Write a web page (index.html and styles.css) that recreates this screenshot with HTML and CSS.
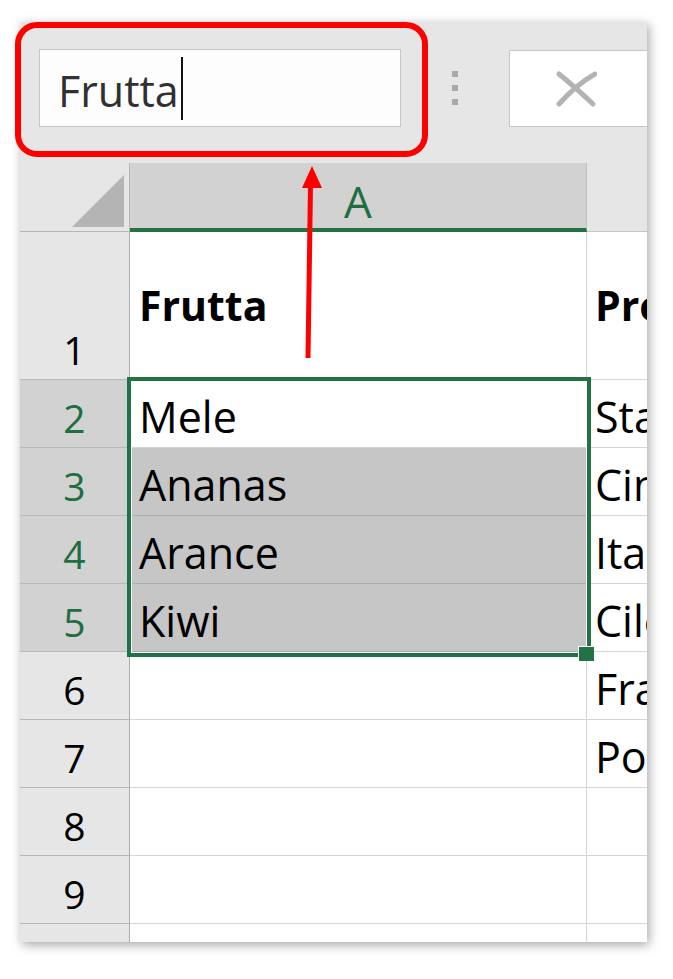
FILE: index.html
```html
<!DOCTYPE html>
<html lang="it">
<head>
<meta charset="utf-8">
<title>Casella Nome</title>
<link rel="stylesheet" href="styles.css">
</head>
<body>
<div class="stage">
  <div class="sheet">
    <div class="fbar">
      <div class="namebox"><span class="nb-text">Frutta</span><span class="caret"></span></div>
      <div class="grip"><i></i><i></i><i></i></div>
      <div class="cancel">
        <svg class="x-icon" width="42" height="38" viewBox="0 0 42 38" aria-hidden="true">
          <path d="M4 4 Q20 17 38 34" />
          <path d="M40 4 Q22 14 4 34" />
        </svg>
      </div>
    </div>

    <div class="hrow">
      <div class="corner">
        <svg width="52" height="52" viewBox="0 0 52 52" aria-hidden="true"><polygon points="52,0 52,52 0,52" /></svg>
      </div>
      <div class="colhdr sel">A</div>
      <div class="colhdr">B</div>
    </div>

    <div class="row tall">
      <div class="rh">1</div>
      <div class="c head">Frutta</div>
      <div class="c b head">Provenienza</div>
    </div>
    <div class="row">
      <div class="rh sel">2</div>
      <div class="c">Mele</div>
      <div class="c b">Stati Uniti</div>
    </div>
    <div class="row">
      <div class="rh sel">3</div>
      <div class="c fill">Ananas</div>
      <div class="c b">Cina</div>
    </div>
    <div class="row">
      <div class="rh sel">4</div>
      <div class="c fill">Arance</div>
      <div class="c b">Italia</div>
    </div>
    <div class="row">
      <div class="rh sel">5</div>
      <div class="c fill">Kiwi</div>
      <div class="c b">Cile</div>
    </div>
    <div class="row">
      <div class="rh">6</div>
      <div class="c"></div>
      <div class="c b">Francia</div>
    </div>
    <div class="row">
      <div class="rh">7</div>
      <div class="c"></div>
      <div class="c b">Portogallo</div>
    </div>
    <div class="row">
      <div class="rh">8</div>
      <div class="c"></div>
      <div class="c b"></div>
    </div>
    <div class="row">
      <div class="rh">9</div>
      <div class="c"></div>
      <div class="c b"></div>
    </div>
    <div class="row">
      <div class="rh">10</div>
      <div class="c"></div>
      <div class="c b"></div>
    </div>

    <div class="selection"><span class="handle"></span></div>
  </div>

  <div class="callout"></div>
  <svg class="arrow" width="32" height="202" viewBox="0 0 32 202" aria-hidden="true">
    <line x1="14.5" y1="24" x2="12" y2="198" />
    <polygon points="16,6 6,28 26,28" />
  </svg>
</div>
</body>
</html>
```

FILE: styles.css
```css
* { box-sizing: border-box; }

html, body {
  margin: 0;
  background: #ffffff;
}

body {
  font-family: "Open Sans", "Noto Sans", sans-serif;
  color: #000;
}

.stage {
  position: relative;
  width: 673px;
  height: 979px;
  padding: 22px 0 0 20px;
}

.sheet {
  position: relative;
  width: 627px;
  height: 920px;
  overflow: hidden;
  background: #ffffff;
  box-shadow: 2px 3px 10px rgba(0, 0, 0, 0.35);
}

/* formula bar */
.fbar {
  height: 141px;
  background: #e6e6e6;
  display: flex;
  align-items: flex-start;
  padding: 27px 0 0 19px;
}

.namebox {
  width: 362px;
  height: 78px;
  flex: none;
  border: 1px solid #c6c6c6;
  background: #fdfdfd;
  display: flex;
  padding-left: 18px;
}

.nb-text {
  align-self: flex-end;
  font-size: 43px;
  line-height: 1;
  padding-bottom: 14px;
  color: #303030;
}

.caret {
  width: 2px;
  height: 63px;
  margin-top: 7px;
  margin-left: 2px;
  background: #111;
}

.grip {
  flex: none;
  margin-left: 51px;
  padding-top: 22px;
  display: flex;
  flex-direction: column;
  gap: 8px;
}

.grip i {
  display: block;
  width: 6px;
  height: 6px;
  background: #a9a9a9;
}

.cancel {
  flex: none;
  margin-left: 51px;
  margin-top: 1px;
  width: 200px;
  height: 77px;
  border: 1px solid #c6c6c6;
  background: #ffffff;
  display: flex;
  align-items: center;
  padding-left: 45px;
}

.x-icon path {
  fill: none;
  stroke: #b3b3b3;
  stroke-width: 5;
  stroke-linecap: round;
}

/* column header */
.hrow {
  display: grid;
  grid-template-columns: 110px 457px 300px;
  height: 69px;
}

.corner {
  background: #e6e6e6;
  border-right: 1px solid #b5b5b5;
  border-bottom: 1px solid #b5b5b5;
  display: flex;
  justify-content: flex-end;
  align-items: flex-end;
  padding: 0 5px 4px 0;
}

.corner polygon { fill: #b4b4b4; }

.colhdr {
  background: #e6e6e6;
  border-bottom: 1px solid #c6c6c6;
  display: flex;
  justify-content: center;
  align-items: flex-end;
  font-size: 44px;
  line-height: 1;
  padding-bottom: 5px;
  color: #444;
}

.colhdr.sel {
  background: #d2d2d2;
  border-right: 1px solid #c0c0c0;
  border-bottom: 4px solid #217346;
  color: #1e6e42;
}

/* rows */
.row {
  display: grid;
  grid-template-columns: 110px 457px 300px;
  height: 68px;
}

.row.tall { height: 148px; }

.rh {
  background: #e6e6e6;
  border-right: 1px solid #ababab;
  border-bottom: 1px solid #b8b8b8;
  display: flex;
  justify-content: center;
  align-items: flex-end;
  font-size: 39px;
  line-height: 1;
  padding-bottom: 10px;
  color: #000;
}

.rh.sel {
  background: #d2d2d2;
  color: #1e6e42;
}

.c {
  border-right: 1px solid #d4d4d4;
  border-bottom: 1px solid #d4d4d4;
  display: flex;
  align-items: flex-end;
  padding: 0 0 9px 9px;
  font-size: 43px;
  line-height: 1;
  white-space: nowrap;
  overflow: hidden;
  color: #000;
}

.c.b { padding-left: 8px; }

.c.fill {
  background: #c6c6c6;
  border-bottom-color: #adadad;
}

.c.head {
  font-weight: 700;
  font-size: 41px;
  align-items: center;
  padding-bottom: 0;
}

/* selection */
.selection {
  position: absolute;
  left: 107px;
  top: 355px;
  width: 464px;
  height: 280px;
  border: 4px solid #217346;
  box-shadow: inset 0 0 0 1px #ffffff;
  pointer-events: none;
}

.handle {
  position: absolute;
  right: -7px;
  bottom: -8px;
  width: 16px;
  height: 15px;
  background: #217346;
  border-top: 1px solid #ffffff;
  border-left: 1px solid #ffffff;
}

/* annotation */
.callout {
  position: absolute;
  left: 15px;
  top: 22px;
  width: 413px;
  height: 135px;
  border: 6px solid #fe0000;
  border-radius: 22px;
}

.arrow {
  position: absolute;
  left: 296px;
  top: 160px;
}

.arrow line {
  stroke: #fe0000;
  stroke-width: 5;
}

.arrow polygon { fill: #fe0000; }
```
